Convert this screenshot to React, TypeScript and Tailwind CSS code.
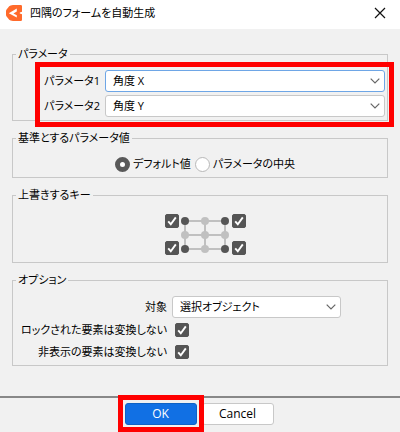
import React, { useState } from 'react';

const fieldsetClass = 'min-w-0 border border-[#c8c8c8] pb-[3px]';
const legendClass = 'ml-[3px] px-[2px] leading-4';

function Logo() {
  return (
    <svg className="size-4 shrink-0" viewBox="0 0 16 16" aria-hidden="true">
      <path d="M4.6 0.6 7 0H14.8Q16 0 16 1.2V6.8L13.8 7.4V8.6L16 9.2V14.8Q16 16 14.8 16H7L4.6 15.4Q3 15 2.2 13.6L0.4 11.2Q0 10.6 0 9.8V6.2Q0 5.4 0.4 4.8L2.2 2.4Q3 1 4.6 0.6Z" fill="#ff6a2b" />
      <path d="M10.8 3.6 2.8 8.2 10.8 12.6V10.2L7.4 8.4 10.8 6.4Z" fill="#fff" />
    </svg>
  );
}

interface DropdownProps {
  id: string;
  options: string[];
  active?: boolean;
}

function Dropdown({ id, options, active }: DropdownProps) {
  return (
    <div className="relative">
      <select
        id={id}
        className={`block h-[22px] w-full appearance-none rounded-[3px] border bg-white pr-6 pl-[7px] leading-5 outline-none ${
          active ? 'border-[#6ea6e6]' : 'border-[#c8c8c8]'
        }`}
      >
        {options.map((option) => (
          <option key={option}>{option}</option>
        ))}
      </select>
      <svg className="pointer-events-none absolute top-2 right-[5px] h-[6px] w-[10px]" viewBox="0 0 10 6" aria-hidden="true">
        <path d="M0.7 0.7 5 5 9.3 0.7" fill="none" stroke="#666" strokeWidth="1.2" />
      </svg>
    </div>
  );
}

function Checkbox({ id, label }: { id?: string; label?: string }) {
  const [checked, setChecked] = useState(true);
  return (
    <span className="relative block size-[14px]">
      <input
        id={id}
        type="checkbox"
        aria-label={label}
        checked={checked}
        onChange={(e) => setChecked(e.target.checked)}
        className="block size-[14px] appearance-none rounded-[2px] border border-[#555] bg-white checked:bg-[#555]"
      />
      {checked && (
        <svg className="pointer-events-none absolute inset-0" viewBox="0 0 14 14" aria-hidden="true">
          <path d="M3.2 7.4 5.8 10.2 10.8 3.4" fill="none" stroke="#fff" strokeWidth="1.9" />
        </svg>
      )}
    </span>
  );
}

function Radio({ label, defaultChecked }: { label: string; defaultChecked?: boolean }) {
  return (
    <label className="flex items-center gap-[3px]">
      <input
        type="radio"
        name="base"
        defaultChecked={defaultChecked}
        className="size-[15px] appearance-none rounded-full border border-[#b8b8b8] bg-white checked:border-[5px] checked:border-[#595959]"
      />
      {label}
    </label>
  );
}

// 3x3 key grid, the corners are the keys that get overwritten
function KeyGrid() {
  const xs = [4, 24, 44];
  const ys = [4, 18, 32];
  return (
    <svg className="h-9 w-[49px]" viewBox="0 0 49 36" aria-hidden="true">
      <path d="M4 4H44V32H4ZM4 18H44M24 4V32" fill="none" stroke="#c0c0c0" strokeWidth="2" />
      {ys.map((y) =>
        xs.map((x) => (
          <circle key={`${x}-${y}`} cx={x} cy={y} r="4" fill={x !== 24 && y !== 18 ? '#555' : '#c0c0c0'} />
        ))
      )}
    </svg>
  );
}

const App: React.FC = () => {
  return (
    <div className="min-h-screen bg-[#f1f1f1] font-['Open_Sans','Noto_Sans_CJK_JP',sans-serif] text-[11px] leading-4 text-black [font-feature-settings:'palt']">
      {/* Title bar */}
      <header className="flex h-[29px] items-center justify-between bg-white pr-[14px] pb-1 pl-[6px]">
        <div className="flex items-center gap-2">
          <Logo />
          <h1>四隅のフォームを自動生成</h1>
        </div>
        <button type="button" aria-label="閉じる">
          <svg className="size-3" viewBox="0 0 12 12" aria-hidden="true">
            <path d="M1 1 11 11M11 1 1 11" stroke="#111" strokeWidth="1.2" />
          </svg>
        </button>
      </header>

      <main className="flex flex-col gap-[9px] px-3 pt-[17px]">
        {/* Parameters */}
        <div className="relative">
          <fieldset className={fieldsetClass}>
            <legend className={legendClass}>パラメータ</legend>
            <div className="grid grid-cols-[87px_1fr] items-center gap-x-[5px] gap-y-[3px] pt-2 pr-[2px]">
              <label htmlFor="param1" className="text-right">パラメータ1</label>
              <Dropdown id="param1" options={['角度 X']} active />
              <label htmlFor="param2" className="text-right">パラメータ2</label>
              <Dropdown id="param2" options={['角度 Y']} />
            </div>
          </fieldset>
          <div className="pointer-events-none absolute top-4 -right-[6px] -bottom-[6px] left-[23px] border-[5px] border-[#f00]" />
        </div>

        {/* Base value */}
        <fieldset className={fieldsetClass}>
          <legend className={legendClass}>基準とするパラメータ値</legend>
          <div className="flex justify-center gap-1 pt-[10px] pb-[2px] pl-[10px]">
            <Radio label="デフォルト値" defaultChecked />
            <Radio label="パラメータの中央" />
          </div>
        </fieldset>

        {/* Keys to overwrite */}
        <fieldset className={fieldsetClass}>
          <legend className={legendClass}>上書きするキー</legend>
          <div className="flex items-center justify-center gap-[2px] pt-[11px] pb-1 pl-[11px]">
            <div className="flex flex-col gap-[13px]">
              <Checkbox label="左上" />
              <Checkbox label="左下" />
            </div>
            <KeyGrid />
            <div className="flex flex-col gap-[13px]">
              <Checkbox label="右上" />
              <Checkbox label="右下" />
            </div>
          </div>
        </fieldset>

        {/* Options */}
        <fieldset className={fieldsetClass}>
          <legend className={legendClass}>オプション</legend>
          <div className="grid grid-cols-[154px_169px] items-center gap-x-[5px] pt-2">
            <label htmlFor="target" className="text-right">対象</label>
            <Dropdown id="target" options={['選択オブジェクト']} />
            <label htmlFor="locked" className="text-right leading-6">ロックされた要素は変換しない</label>
            <div className="pl-[3px]">
              <Checkbox id="locked" />
            </div>
            <label htmlFor="hidden" className="text-right leading-5">非表示の要素は変換しない</label>
            <div className="pl-[3px]">
              <Checkbox id="hidden" />
            </div>
          </div>
        </fieldset>
      </main>

      {/* Buttons */}
      <footer className="mt-[30px] border-t-2 border-[#888] pt-[5px] pb-[7px]">
        <div className="flex justify-center gap-[5px] pr-[2px] text-[12px]">
          <div className="relative z-10">
            <button type="button" className="block h-[22px] w-[72px] rounded-[3px] border border-[#0f62c4] bg-[#1170e4] font-medium text-white">
              OK
            </button>
            <div className="pointer-events-none absolute -inset-x-[7px] -top-2 -bottom-[7px] border-[5px] border-[#f00]" />
          </div>
          <button type="button" className="h-[22px] w-[72px] rounded-[3px] border border-[#c8c8c8] bg-white">
            Cancel
          </button>
        </div>
      </footer>
    </div>
  );
};

export default App;
